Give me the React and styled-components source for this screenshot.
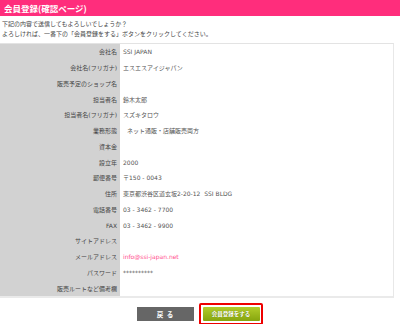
import React from "react";
import styled, { createGlobalStyle } from "styled-components";

const rows = [
    { label: "会社名", value: "SSI JAPAN" },
    { label: "会社名(フリガナ)", value: "エスエスアイジャパン" },
    { label: "販売予定のショップ名", value: "" },
    { label: "担当者名", value: "鈴木太郎" },
    { label: "担当者名(フリガナ)", value: "スズキタロウ" },
    { label: "業務形態", value: "ネット通販・店舗販売両方", indent: true },
    { label: "資本金", value: "" },
    { label: "設立年", value: "2000" },
    { label: "郵便番号", value: "〒150 - 0043" },
    { label: "住所", value: "東京都渋谷区道玄坂2-20-12\u00a0\u00a0SSI BLDG" },
    { label: "電話番号", value: "03 - 3462 - 7700" },
    { label: "FAX", value: "03 - 3462 - 9900" },
    { label: "サイトアドレス", value: "" },
    { label: "メールアドレス", value: "info@ssi-japan.net", link: true },
    { label: "パスワード", value: "**********" },
    { label: "販売ルートなど備考欄", value: "" }
];

const App = () => (
    <Page>
        <GlobalStyle />
        <Header>会員登録(確認ページ)</Header>
        <Intro>
            下記の内容で送信してもよろしいでしょうか？
            <br />
            よろしければ、一番下の「会員登録をする」ボタンをクリックしてください。
        </Intro>
        <Table>
            {rows.map((row) => (
                <React.Fragment key={row.label}>
                    <Label>{row.label}</Label>
                    <Value $link={row.link} $indent={row.indent}>
                        {row.value}
                    </Value>
                </React.Fragment>
            ))}
        </Table>
        <Buttons>
            <BackButton>戻 る</BackButton>
            <Highlight>
                <SubmitButton>会員登録をする</SubmitButton>
            </Highlight>
        </Buttons>
    </Page>
);

export default App;

const GlobalStyle = createGlobalStyle`
    body {
        margin: 0;
        background: #ffffff;
        font-family: "DejaVu Sans", "Noto Sans CJK JP", sans-serif;
    }
`;

const Page = styled.div`
    width: 400px;
    height: 324px;
    overflow: hidden;
`;

const Header = styled.div`
    height: 16px;
    line-height: 16px;
    padding-left: 4px;
    background: #ff2d7c;
    color: #ffffff;
    font-family: "Noto Sans CJK JP", sans-serif;
    font-size: 8.5px;
    font-weight: bold;
`;

const Intro = styled.div`
    padding: 3px 0 0 2px;
    font-size: 6px;
    line-height: 10px;
    color: #444444;
`;

const Table = styled.div`
    display: grid;
    grid-template-columns: 120px 1fr;
    grid-auto-rows: 15.75px;
    width: 393px;
    margin-top: 4px;
    border-top: 1px solid #e3e3e3;
    border-right: 1px solid #e8e8e8;
    border-bottom: 2px solid #eaeaea;
`;

const Label = styled.div`
    display: flex;
    align-items: center;
    justify-content: flex-end;
    padding-right: 3px;
    background: #d2d2d2;
    color: #444444;
    font-size: 6px;
`;

const Value = styled.div`
    display: flex;
    align-items: center;
    padding-left: ${(p) => (p.$indent ? "7px" : "3px")};
    color: ${(p) => (p.$link ? "#ff4f8e" : "#555555")};
    font-size: 6px;
    white-space: pre;
`;

const Buttons = styled.div`
    display: flex;
    justify-content: center;
    align-items: center;
    gap: 5px;
    margin-top: 5px;
`;

const BackButton = styled.div`
    width: 57px;
    height: 14px;
    line-height: 14px;
    text-align: center;
    background: #666666;
    color: #ffffff;
    font-family: "Noto Sans CJK JP", sans-serif;
    font-size: 6.5px;
    font-weight: bold;
    letter-spacing: 1px;
`;

const Highlight = styled.div`
    padding: 2px 1.5px;
    border: 2px solid #ee0000;
    border-radius: 2px;
`;

const SubmitButton = styled.div`
    width: 57px;
    height: 14px;
    line-height: 14px;
    text-align: center;
    background: linear-gradient(#b2cc2a, #86a50e);
    border-radius: 1px;
    color: #ffffff;
    font-family: "Noto Sans CJK JP", sans-serif;
    font-size: 5.5px;
    font-weight: bold;
    text-shadow: 0 0 1px #5a7000;
`;
